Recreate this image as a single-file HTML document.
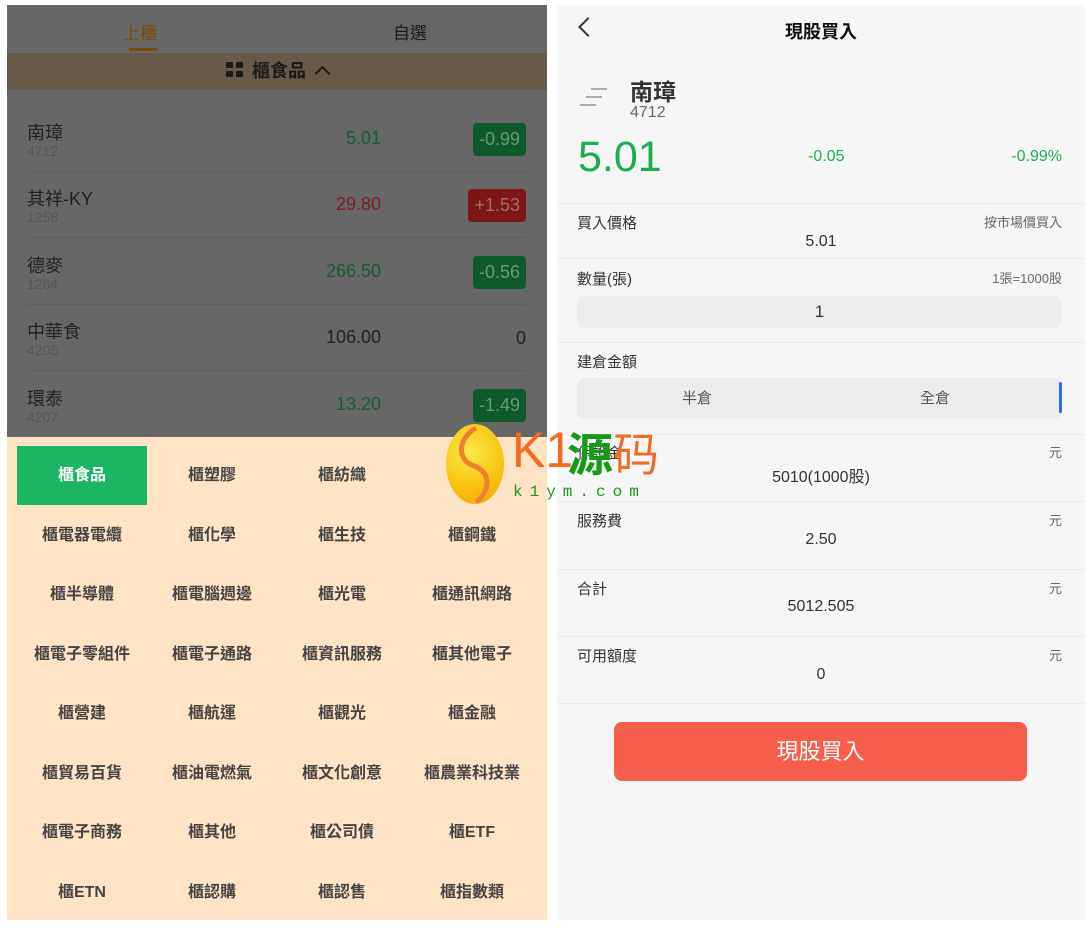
<!DOCTYPE html>
<html><head><meta charset="utf-8"><style>
*{margin:0;padding:0;box-sizing:border-box}
body{width:1090px;height:928px;background:#fff;position:relative;overflow:hidden;font-family:"Liberation Sans","Noto Sans CJK TC",sans-serif;color:#333}
.abs{position:absolute}
#L{left:7px;top:5px;width:540px;height:915px;background:#fee3c5;overflow:hidden}
#top{position:absolute;left:0;top:0;width:540px;height:432px;background:#676767}
.tab{position:absolute;top:14px;font-size:17px}
#cat{position:absolute;left:0;top:48px;width:540px;height:37px;background:#675a4b;text-align:center;font-size:18px;font-weight:bold;color:#1a1a1a;line-height:37px}
.row{position:absolute;left:20px;width:499px;height:66px;border-bottom:1px solid #5e5e5e}
.row .n{position:absolute;left:0;top:13px;font-size:18px;color:#222}
.row .c{position:absolute;left:0;top:37px;font-size:14px;color:#555}
.row .p{position:absolute;right:145px;top:22px;font-size:18px}
.row .b{position:absolute;right:0;top:17px;height:33px;border-radius:4px;padding:0 6px;font-size:18px;line-height:33px;color:#6a6a6a}
.g{color:#155c30}.r{color:#7d1e1c}
.gb{background:#0e5a2c;color:#6b9779!important}.rb{background:#7d1717;color:#a07070!important}
.cell{position:absolute;width:130px;height:59px;text-align:center;line-height:59px;font-size:16px;font-weight:bold;color:#444}
#R{left:557px;top:5px;width:528px;height:915px;background:#f6f6f6}
.hr{position:absolute;left:0;width:528px;height:1px;background:#ebebeb}
.lab{position:absolute;left:20px;font-size:15px;color:#333}
.rt{position:absolute;right:23px;font-size:13px;color:#666}
.val{position:absolute;left:0;width:528px;text-align:center;font-size:16px;color:#333}
</style></head><body>
<div id="L" class="abs">
<div id="top">
 <div class="tab" style="left:116px;color:#7a4a00">上櫃</div>
 <div style="position:absolute;left:122px;top:43px;width:28px;height:3px;background:#7a4a00;border-radius:2px"></div>
 <div class="tab" style="left:386px;color:#1a1a1a">自選</div>
 <div id="cat"><span style="display:inline-block;vertical-align:middle;width:18px;height:16px;position:relative;margin-right:8px;top:-2px"><i style="position:absolute;left:0;top:0;width:7px;height:6px;background:#1a1a1a;border-radius:1px"></i><i style="position:absolute;left:10px;top:0;width:7px;height:6px;background:#1a1a1a;border-radius:1px"></i><i style="position:absolute;left:0;top:9px;width:7px;height:6px;background:#1a1a1a;border-radius:1px"></i><i style="position:absolute;left:10px;top:9px;width:7px;height:6px;background:#1a1a1a;border-radius:1px"></i></span>櫃食品 <span style="display:inline-block;width:11px;height:11px;border-left:2.5px solid #1a1a1a;border-top:2.5px solid #1a1a1a;transform:rotate(45deg);margin-left:6px;position:relative;top:2px"></span></div>
 <div class="row" style="top:101px"><div class="n">南璋</div><div class="c">4712</div><div class="p g">5.01</div><div class="b gb">-0.99</div></div>
 <div class="row" style="top:167px"><div class="n">其祥-KY</div><div class="c">1258</div><div class="p r">29.80</div><div class="b rb">+1.53</div></div>
 <div class="row" style="top:234px"><div class="n">德麥</div><div class="c">1264</div><div class="p g">266.50</div><div class="b gb">-0.56</div></div>
 <div class="row" style="top:300px"><div class="n">中華食</div><div class="c">4205</div><div class="p" style="color:#222">106.00</div><div class="b" style="color:#222;padding:0">0</div></div>
 <div class="row" style="top:367px;border:0"><div class="n">環泰</div><div class="c">4207</div><div class="p g">13.20</div><div class="b gb">-1.49</div></div>
</div>
<div class="cell" style="left:10px;top:441px;background:#1bb563;color:#fff">櫃食品</div>
<div class="cell" style="left:140px;top:441px">櫃塑膠</div>
<div class="cell" style="left:270px;top:441px">櫃紡織</div>
<div class="cell" style="left:400px;top:441px">櫃電機</div>
<div class="cell" style="left:10px;top:501px">櫃電器電纜</div>
<div class="cell" style="left:140px;top:501px">櫃化學</div>
<div class="cell" style="left:270px;top:501px">櫃生技</div>
<div class="cell" style="left:400px;top:501px">櫃鋼鐵</div>
<div class="cell" style="left:10px;top:560px">櫃半導體</div>
<div class="cell" style="left:140px;top:560px">櫃電腦週邊</div>
<div class="cell" style="left:270px;top:560px">櫃光電</div>
<div class="cell" style="left:400px;top:560px">櫃通訊網路</div>
<div class="cell" style="left:10px;top:620px">櫃電子零組件</div>
<div class="cell" style="left:140px;top:620px">櫃電子通路</div>
<div class="cell" style="left:270px;top:620px">櫃資訊服務</div>
<div class="cell" style="left:400px;top:620px">櫃其他電子</div>
<div class="cell" style="left:10px;top:679px">櫃營建</div>
<div class="cell" style="left:140px;top:679px">櫃航運</div>
<div class="cell" style="left:270px;top:679px">櫃觀光</div>
<div class="cell" style="left:400px;top:679px">櫃金融</div>
<div class="cell" style="left:10px;top:739px">櫃貿易百貨</div>
<div class="cell" style="left:140px;top:739px">櫃油電燃氣</div>
<div class="cell" style="left:270px;top:739px">櫃文化創意</div>
<div class="cell" style="left:400px;top:739px">櫃農業科技業</div>
<div class="cell" style="left:10px;top:798px">櫃電子商務</div>
<div class="cell" style="left:140px;top:798px">櫃其他</div>
<div class="cell" style="left:270px;top:798px">櫃公司債</div>
<div class="cell" style="left:400px;top:798px">櫃ETF</div>
<div class="cell" style="left:10px;top:858px">櫃ETN</div>
<div class="cell" style="left:140px;top:858px">櫃認購</div>
<div class="cell" style="left:270px;top:858px">櫃認售</div>
<div class="cell" style="left:400px;top:858px">櫃指數類</div>
</div>

<div id="R" class="abs">
 <div style="position:absolute;left:24px;top:15px;width:14px;height:14px;border-left:2px solid #333;border-bottom:2px solid #333;transform:rotate(45deg)"></div>
 <div style="position:absolute;left:0;width:528px;top:13px;text-align:center;font-size:18px;font-weight:bold;color:#111">現股買入</div>
 <svg class="abs" style="left:20px;top:80px" width="36" height="30"><path d="M14 4h16M9 12h16M3 20h16" stroke="#aaa" stroke-width="2"/></svg>
 <div class="abs" style="left:73px;top:68px;font-size:23px;font-weight:bold;color:#333">南璋</div>
 <div class="abs" style="left:73px;top:99px;font-size:16px;color:#666">4712</div>
 <div class="abs" style="left:21px;top:128px;font-size:43px;color:#1bae50">5.01</div>
 <div class="abs" style="left:251px;top:143px;font-size:16px;color:#1bae50">-0.05</div>
 <div class="abs" style="right:23px;top:143px;font-size:16px;color:#1bae50">-0.99%</div>
 <div class="hr" style="top:198px"></div>
 <div class="lab" style="top:207px">買入價格</div><div class="rt" style="top:207px">按市場價買入</div>
 <div class="val" style="top:228px">5.01</div>
 <div class="hr" style="top:253px"></div>
 <div class="lab" style="top:263px">數量(張)</div><div class="rt" style="top:263px">1張=1000股</div>
 <div class="abs" style="left:20px;top:291px;width:485px;height:32px;background:#ececec;border-radius:8px;text-align:center;line-height:32px;font-size:17px">1</div>
 <div class="hr" style="top:337px"></div>
 <div class="lab" style="top:346px">建倉金額</div>
 <div class="abs" style="left:20px;top:373px;width:485px;height:41px;background:#ececec;border-radius:8px;font-size:15px;color:#555;line-height:41px"><span style="position:absolute;left:105px">半倉</span><span style="position:absolute;left:343px">全倉</span><i style="position:absolute;right:0;top:4px;width:3px;height:31px;background:#2a6ff0;border-radius:2px"></i></div>
 <div class="hr" style="top:429px"></div>
 <div class="lab" style="top:437px">保證金</div><div class="rt" style="top:437px">元</div>
 <div class="val" style="top:458px">5010(1000股)</div>
 <div class="hr" style="top:496px"></div>
 <div class="lab" style="top:505px">服務費</div><div class="rt" style="top:505px">元</div>
 <div class="val" style="top:526px">2.50</div>
 <div class="hr" style="top:564px"></div>
 <div class="lab" style="top:573px">合計</div><div class="rt" style="top:573px">元</div>
 <div class="val" style="top:593px">5012.505</div>
 <div class="hr" style="top:631px"></div>
 <div class="lab" style="top:640px">可用額度</div><div class="rt" style="top:640px">元</div>
 <div class="val" style="top:661px">0</div>
 <div class="hr" style="top:698px"></div>
 <div class="abs" style="left:57px;top:717px;width:413px;height:59px;background:#f45e4b;border-radius:8px;text-align:center;line-height:59px;color:#fff;font-size:22px">現股買入</div>
</div>

<div class="abs" style="left:446px;top:424px;width:58px;height:80px;border-radius:50%;background:radial-gradient(circle at 40% 35%,#ffe94a,#f7c10a 60%,#f2a40a)"></div>
<svg class="abs" style="left:446px;top:424px" width="58" height="80"><path d="M30 4C12 14 10 36 28 42C44 47 46 66 30 78" stroke="#f08030" stroke-width="5" fill="none"/></svg>
<div class="abs" style="left:512px;top:422px;font-size:50px;line-height:56px;color:#f26b22;font-family:'Liberation Sans',sans-serif">K1</div>
<div class="abs" style="left:567px;top:424px;font-size:46px;line-height:56px;font-weight:bold;color:#189a18;font-family:'Noto Sans CJK SC',sans-serif">源<span style="color:#f26b22;font-weight:normal">码</span></div>
<div class="abs" style="left:513px;top:483px;font-size:16px;letter-spacing:7px;color:#189a18;font-family:'Liberation Mono',monospace">k1ym.com</div>
</body></html>
